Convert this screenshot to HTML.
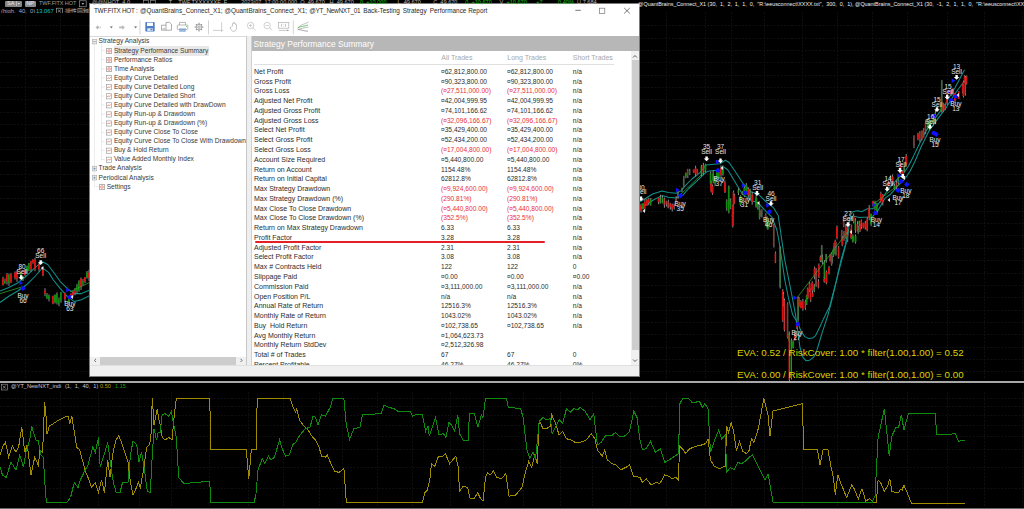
<!DOCTYPE html>
<html><head><meta charset="utf-8">
<style>
*{margin:0;padding:0;box-sizing:border-box}
html,body{width:1024px;height:509px;overflow:hidden;background:#000}
body{position:relative;font-family:"Liberation Sans",sans-serif}
.abs{position:absolute}
#dlg{position:absolute;left:89px;top:3px;width:551px;height:374px;background:#fff;border:1px solid #7a7a7a;overflow:hidden}
#dlg .in{position:absolute;left:-90px;top:-4px;width:1024px;height:509px}
.title{position:absolute;left:94px;top:7.4px;font-size:6.4px;color:#2a2a2a;white-space:nowrap;line-height:8px}
.tb{position:absolute}
#tree{position:absolute;left:90px;top:36px;width:157px;height:329px;background:#fff;border-top:1px solid #d9d9d9;border-right:1px solid #c8c8c8;overflow:hidden}
#tree .in2{position:absolute;left:-90px;top:-36px;width:1024px;height:509px}
.ti{position:absolute;font-size:6.62px;line-height:10px;color:#383838;white-space:nowrap}
.ti.sel{background:#e8e8e8;padding-right:1px}
.tb{position:absolute;left:92.3px;width:4.6px;height:5px;border:1px solid #b9b9b9;background:#e9e9e9}
.tbm{position:absolute;left:93.5px;width:2.4px;height:1px;background:#8aa0b8}
.tbp{position:absolute;left:94.2px;width:1px;height:3px;background:#8aa0b8}
.hd{position:absolute;left:101.5px;width:4px;height:0;border-top:1px dotted #c8c8c8}
.hd2{position:absolute;left:95px;width:5px;height:0;border-top:1px dotted #c8c8c8}
.ic{position:absolute;width:5.6px;height:5.8px;border:1px solid #a0a0a0;background:#fff}
.ic.grid{background:linear-gradient(90deg,transparent 40%,#f07070 40%,#f07070 60%,transparent 60%),linear-gradient(0deg,transparent 40%,#f07070 40%,#f07070 60%,transparent 60%),#f8c8c0}
.ic.chart{background:#fff}
.ic.chart::after{content:"";position:absolute;left:0.8px;top:1.6px;width:2.6px;height:1px;background:#e04040}
#tbl{position:absolute;left:251px;top:36px;width:388px;height:329px;background:#fff;overflow:hidden;border-left:1px solid #d0d0d0}
#tbl .in3{position:absolute;left:-251px;top:-36px;width:1024px;height:509px}
.hdr{position:absolute;left:251px;top:36px;width:388px;height:15px;background:#b7b7b7;color:#fff;font-size:8.45px;line-height:17px;padding-left:1.5px;white-space:nowrap}
.colh{position:absolute;top:53px;font-size:7px;color:#a8a8a8;white-space:nowrap;line-height:10px}
.r{position:absolute;left:0;height:10px;width:640px;font-size:7px;line-height:10px;color:#2c2c2c;white-space:nowrap}
.r span{position:absolute;top:0}
.c0{left:253px}.c1,.c2,.c3{font-size:6.64px}.c1{left:440px}.c2{left:506px}.c3{left:571.8px}
.red{color:#e8303a}
.lb{position:absolute;width:20px;text-align:center;font-size:6.5px;line-height:4.9px;color:#e8e8e8;white-space:nowrap}
</style></head><body>
<svg class="abs" style="left:0;top:0" width="1024" height="509" viewBox="0 0 1024 509">
<g stroke="#0f0f0f" stroke-width="1" stroke-dasharray="2 1.5" fill="none"><line x1="25.5" y1="12" x2="25.5" y2="380" /><line x1="60.5" y1="12" x2="60.5" y2="380" /><line x1="666.5" y1="12" x2="666.5" y2="380" /><line x1="705.5" y1="12" x2="705.5" y2="380" /><line x1="731.5" y1="12" x2="731.5" y2="380" /><line x1="764.5" y1="12" x2="764.5" y2="380" /><line x1="802.5" y1="12" x2="802.5" y2="380" /><line x1="837.5" y1="12" x2="837.5" y2="380" /><line x1="872.5" y1="12" x2="872.5" y2="380" /><line x1="907.5" y1="12" x2="907.5" y2="380" /><line x1="947.5" y1="12" x2="947.5" y2="380" /><line x1="984.5" y1="12" x2="984.5" y2="380" /><line x1="1022.5" y1="12" x2="1022.5" y2="380" /><line x1="25.5" y1="392" x2="25.5" y2="507" /><line x1="60.5" y1="392" x2="60.5" y2="507" /><line x1="666.5" y1="392" x2="666.5" y2="507" /><line x1="705.5" y1="392" x2="705.5" y2="507" /><line x1="731.5" y1="392" x2="731.5" y2="507" /><line x1="764.5" y1="392" x2="764.5" y2="507" /><line x1="802.5" y1="392" x2="802.5" y2="507" /><line x1="837.5" y1="392" x2="837.5" y2="507" /><line x1="872.5" y1="392" x2="872.5" y2="507" /><line x1="907.5" y1="392" x2="907.5" y2="507" /><line x1="947.5" y1="392" x2="947.5" y2="507" /><line x1="984.5" y1="392" x2="984.5" y2="507" /><line x1="1022.5" y1="392" x2="1022.5" y2="507" /><line x1="98.5" y1="392" x2="98.5" y2="507" /><line x1="139.5" y1="392" x2="139.5" y2="507" /><line x1="171.5" y1="392" x2="171.5" y2="507" /><line x1="209.5" y1="392" x2="209.5" y2="507" /><line x1="248.5" y1="392" x2="248.5" y2="507" /><line x1="283.5" y1="392" x2="283.5" y2="507" /><line x1="319.5" y1="392" x2="319.5" y2="507" /><line x1="342.5" y1="392" x2="342.5" y2="507" /><line x1="377.5" y1="392" x2="377.5" y2="507" /><line x1="412.5" y1="392" x2="412.5" y2="507" /><line x1="450.5" y1="392" x2="450.5" y2="507" /><line x1="483.5" y1="392" x2="483.5" y2="507" /><line x1="523.5" y1="392" x2="523.5" y2="507" /><line x1="560.5" y1="392" x2="560.5" y2="507" /><line x1="592.5" y1="392" x2="592.5" y2="507" /><line x1="630.5" y1="392" x2="630.5" y2="507" /><line x1="0" y1="25.5" x2="1024" y2="25.5" /><line x1="0" y1="38.5" x2="1024" y2="38.5" /><line x1="0" y1="50.5" x2="1024" y2="50.5" /><line x1="0" y1="62.5" x2="1024" y2="62.5" /><line x1="0" y1="75.5" x2="1024" y2="75.5" /><line x1="0" y1="87.5" x2="1024" y2="87.5" /><line x1="0" y1="99.5" x2="1024" y2="99.5" /><line x1="0" y1="112.5" x2="1024" y2="112.5" /><line x1="0" y1="124.5" x2="1024" y2="124.5" /><line x1="0" y1="137.5" x2="1024" y2="137.5" /><line x1="0" y1="149.5" x2="1024" y2="149.5" /><line x1="0" y1="161.5" x2="1024" y2="161.5" /><line x1="0" y1="174.5" x2="1024" y2="174.5" /><line x1="0" y1="186.5" x2="1024" y2="186.5" /><line x1="0" y1="198.5" x2="1024" y2="198.5" /><line x1="0" y1="211.5" x2="1024" y2="211.5" /><line x1="0" y1="223.5" x2="1024" y2="223.5" /><line x1="0" y1="235.5" x2="1024" y2="235.5" /><line x1="0" y1="248.5" x2="1024" y2="248.5" /><line x1="0" y1="260.5" x2="1024" y2="260.5" /><line x1="0" y1="273.5" x2="1024" y2="273.5" /><line x1="0" y1="285.5" x2="1024" y2="285.5" /><line x1="0" y1="297.5" x2="1024" y2="297.5" /><line x1="0" y1="310.5" x2="1024" y2="310.5" /><line x1="0" y1="322.5" x2="1024" y2="322.5" /><line x1="0" y1="334.5" x2="1024" y2="334.5" /><line x1="0" y1="347.5" x2="1024" y2="347.5" /><line x1="0" y1="359.5" x2="1024" y2="359.5" /><line x1="0" y1="371.5" x2="1024" y2="371.5" /><line x1="0" y1="398.5" x2="1024" y2="398.5" /><line x1="0" y1="406.5" x2="1024" y2="406.5" /><line x1="0" y1="415.5" x2="1024" y2="415.5" /><line x1="0" y1="425.5" x2="1024" y2="425.5" /><line x1="0" y1="436.5" x2="1024" y2="436.5" /><line x1="0" y1="449.5" x2="1024" y2="449.5" /><line x1="0" y1="467.5" x2="1024" y2="467.5" /><line x1="0" y1="488.5" x2="1024" y2="488.5" /></g>
<polyline points="0.0,455.0 2.5,447.1 5.4,442.0 8.7,457.2 12.4,446.0 16.0,452.1 18.6,447.1 21.8,427.3 24.8,452.1 27.2,445.0 31.0,475.0 34.7,457.2 38.4,465.3 40.0,450.1 42.6,452.1 44.6,402.3 45.8,412.4 47.0,433.9 49.5,425.8 53.0,423.8 59.4,419.7 63.9,417.4 68.0,416.1 69.8,423.6 71.8,416.1 76.7,447.1 79.7,449.9 85.4,471.2 89.0,479.9 91.6,487.5 95.3,482.5 98.5,492.6 101.5,479.9 104.5,492.6 107.7,459.9 110.0,477.4 112.6,455.0 115.8,440.0 118.8,435.9 122.5,445.0 128.0,462.2 130.5,482.5 133.0,495.0 135.4,490.0 138.4,482.5 140.4,487.5 144.0,467.3 146.6,447.1 149.0,445.0 150.8,440.0 152.3,398.5 154.0,424.8 157.2,408.6 159.0,419.7 160.2,424.8 162.2,437.4 165.0,440.0 168.8,437.4 172.0,440.0 173.8,419.7 176.3,398.5 209.7,398.5 211.0,449.9 246.3,449.9 248.8,478.7 251.3,449.9 256.5,449.9 256.5,434.9 257.2,398.5 290.2,398.5 293.1,407.4 295.6,412.4 296.8,408.6 299.3,419.7 303.0,424.8 308.0,429.9 311.7,435.9 315.4,440.0 319.1,447.1 321.6,456.2 325.3,457.2 327.3,455.0 330.3,462.2 334.7,471.2 338.9,472.4 343.9,468.7 346.3,502.5 422.4,502.5 424.8,492.6 427.3,490.0 429.8,479.9 431.5,463.7 434.7,466.3 438.5,456.2 442.9,456.2 445.4,453.6 449.6,463.7 452.8,459.9 455.8,456.2 458.3,467.3 459.5,491.3 463.2,486.2 467.7,487.5 470.1,498.7 474.3,498.7 477.6,492.6 480.0,497.5 483.0,501.3 485.5,477.4 487.5,472.4 489.9,475.0 493.4,471.2 496.6,477.4 501.6,478.7 505.8,473.7 509.0,496.2 515.7,495.0 521.9,487.5 525.6,471.2 528.8,461.2 531.8,467.3 534.8,455.0 537.2,463.7 539.2,419.7 542.9,428.6 546.7,428.6 550.4,426.1 551.6,414.7 555.3,422.4 559.0,434.9 562.7,431.2 566.5,438.7 570.9,440.0 575.1,442.4 580.0,442.4 586.3,440.0 591.2,433.6 594.9,438.7 597.4,449.9 602.3,456.2 604.8,449.9 607.3,459.9 612.2,463.7 616.0,465.0 620.9,469.9 625.9,467.3 629.6,465.0 633.3,476.2 640.0,477.4 642.5,482.5 646.2,478.7 651.1,485.0 656.1,482.5 659.8,483.7 664.8,475.0 668.5,476.2 672.2,478.7 675.9,477.4 678.4,479.9 679.6,446.0 683.3,449.9 685.8,453.6 689.5,448.7 696.9,446.1 701.9,444.9 705.6,443.6 708.0,438.7 710.5,459.9 714.3,466.2 719.2,468.7 725.4,466.2 726.6,426.1 728.6,432.4 731.1,422.4 733.6,431.2 736.5,451.1 739.5,441.2 742.7,451.1 746.4,453.6 748.9,451.1 751.4,438.7 753.9,442.4 758.3,428.6 763.8,398.5 768.0,414.7 770.0,436.1 773.0,411.1 782.9,408.6 802.2,403.6 803.9,449.9 817.5,449.9 820.0,465.0 823.0,449.9 827.9,449.9 831.1,467.3 833.6,478.7 835.3,495.0 837.8,475.0 841.0,483.7 846.7,497.5 851.7,485.0 854.1,488.7 858.3,498.7 862.0,488.7 865.8,501.3 869.5,498.7 873.2,502.5 876.4,502.5 878.1,479.9 880.6,482.5 884.3,491.3 888.0,485.0 889.8,478.7 891.8,491.3 896.0,492.6 898.5,492.6 901.0,488.7 902.2,490.0 903.9,485.0 907.1,492.6 911.3,503.1 965.0,503.1" fill="none" stroke="#9e8c00" stroke-width="1" shape-rendering="crispEdges"/>
<polyline points="0.0,467.3 2.5,475.0 6.2,477.4 11.0,462.2 16.0,469.9 19.8,455.0 23.5,467.3 26.0,452.1 29.7,440.0 31.7,425.8 33.4,432.4 35.9,440.0 38.4,441.0 40.8,455.0 43.3,457.2 45.8,497.5 47.0,502.5 66.8,502.5 70.5,497.5 74.3,482.5 78.0,487.5 80.4,479.9 84.0,472.4 87.9,465.0 92.8,447.1 95.3,452.1 98.5,437.4 100.2,467.3 104.0,455.0 107.7,442.5 111.4,469.9 113.4,482.5 116.3,492.6 120.0,492.6 122.5,482.5 128.0,482.5 130.5,455.0 133.0,441.0 136.7,445.0 139.0,462.2 141.6,452.1 144.8,472.4 147.3,491.3 150.3,492.6 152.3,455.0 154.0,428.9 156.5,440.0 158.2,432.4 160.2,432.4 162.2,414.7 165.0,413.7 168.8,416.1 171.3,411.1 173.8,424.8 176.3,437.4 178.7,477.4 183.7,483.5 209.7,481.3 211.0,502.5 254.2,502.5 256.0,493.6 258.0,469.9 262.2,458.7 264.7,463.7 268.4,456.2 270.9,459.9 274.5,457.2 279.5,440.0 282.7,449.9 285.7,456.2 289.4,455.0 292.6,444.9 295.6,442.4 300.0,434.9 305.5,428.6 310.0,427.3 313.0,416.1 315.4,417.4 317.9,424.8 321.6,414.7 325.3,416.1 330.3,407.4 332.7,398.5 343.9,398.5 346.3,424.8 349.6,439.4 353.8,428.6 360.0,427.3 362.4,414.7 381.0,413.7 384.0,404.9 389.0,407.4 393.9,408.6 397.6,411.1 410.0,411.1 412.5,416.1 416.2,414.7 422.4,414.7 425.6,431.2 428.0,426.1 429.3,436.1 432.3,427.3 435.5,417.4 439.0,434.9 443.4,433.6 445.9,437.4 448.9,422.4 451.3,424.8 454.5,431.2 457.8,414.7 459.5,433.6 463.2,440.0 468.2,440.0 469.4,413.7 474.3,413.7 478.0,427.3 481.3,414.7 483.0,417.4 485.5,398.5 506.5,398.5 508.3,407.4 520.7,408.6 523.1,417.4 526.9,449.9 529.8,458.7 533.0,452.1 535.5,459.9 539.2,421.2 542.9,417.4 546.2,419.7 550.4,418.6 552.1,433.6 556.6,424.8 559.5,419.7 562.7,423.6 566.5,408.6 570.2,412.4 573.9,408.6 577.6,409.8 580.0,407.4 585.0,411.1 590.0,419.7 593.7,413.7 597.4,444.9 601.0,442.4 606.0,434.9 611.0,436.1 615.5,432.4 619.0,436.1 624.6,436.1 629.6,431.2 633.8,411.1 637.0,417.4 640.0,440.0 642.5,449.9 646.2,448.7 650.4,441.2 655.3,452.1 660.3,448.7 664.8,462.4 669.2,459.9 674.7,456.2 678.4,453.6 680.0,403.6 682.6,398.5 688.3,398.5 692.0,402.3 695.7,402.3 699.4,401.1 702.4,407.4 704.9,403.6 708.0,408.6 710.5,452.4 714.3,441.2 718.7,429.9 721.7,438.7 725.4,434.9 726.6,472.4 730.3,467.3 734.0,469.9 737.8,462.4 741.5,463.7 745.2,461.2 748.9,457.5 752.6,455.0 757.6,465.0 761.3,472.4 765.0,479.9 768.0,473.7 773.0,502.0 774.2,502.5 872.0,502.5 875.0,496.2 878.1,437.4 881.4,422.4 884.3,408.6 889.3,456.2 891.8,436.1 896.0,427.3 898.5,427.8 901.4,414.7 903.9,429.9 908.4,413.7 935.1,413.7 936.8,434.9 945.5,434.9 955.4,433.6 958.4,441.2 964.8,440.4" fill="none" stroke="#0f8a0f" stroke-width="1" shape-rendering="crispEdges"/>
<rect x="0" y="381" width="1024" height="2" fill="#a8a8a8"/>
<rect x="0" y="508" width="1024" height="1" fill="#6a6a6a"/>
<polyline points="640.0,201.9 646.3,198.0 652.6,194.0 662.0,190.9 668.3,192.5 676.2,193.2 680.9,190.9 685.6,185.4 691.9,179.0 699.7,172.8 706.0,165.0 713.9,164.2 720.0,163.8 725.5,160.2 729.3,162.7 734.2,170.0 743.6,184.2 751.4,192.0 757.7,193.6 765.6,201.4 773.5,207.7 778.2,215.6 781.8,240.0 784.7,259.6 788.7,279.3 792.6,299.0 795.5,314.7 797.8,332.0 799.9,347.0 802.8,357.2 805.8,360.7 809.7,360.2 813.6,357.2 816.6,351.3 819.5,341.5 822.5,331.7 825.4,322.9 828.0,315.0 832.1,299.0 838.4,272.6 843.4,253.8 847.5,238.0 849.8,220.5 852.7,216.1 859.6,217.6 867.5,217.1 872.4,216.6 877.3,211.7 881.2,204.8 885.2,197.9 890.0,194.8 898.3,185.4 905.4,178.3 910.0,171.2 914.8,161.8 920.9,147.2 928.7,131.4 936.6,120.4 946.0,107.9 950.8,100.0 958.2,89.3 964.5,80.7" fill="none" stroke="#11908c" stroke-width="1.05" stroke-linejoin="round"/>
<polyline points="640.0,209.0 646.3,204.2 654.2,199.5 662.0,195.6 668.3,197.2 676.2,198.0 682.5,195.6 688.7,188.5 696.6,181.4 702.9,175.2 707.6,171.2 713.9,170.4 720.0,170.4 723.0,166.5 727.9,170.0 742.0,193.6 751.4,200.7 757.7,202.2 764.0,209.3 771.9,217.2 776.9,230.0 778.8,240.0 781.8,259.6 784.7,279.3 788.7,299.0 792.6,314.7 797.9,322.9 800.8,330.7 804.8,336.6 808.7,338.6 812.6,338.1 815.6,335.6 819.5,327.8 823.4,318.9 829.6,306.6 835.9,282.7 841.0,260.0 845.6,243.8 847.8,227.4 850.8,214.6 852.7,211.7 857.6,210.7 861.6,211.7 867.5,208.8 872.4,208.8 877.3,205.8 882.2,198.0 887.7,190.0 895.9,180.6 904.2,172.4 908.9,165.3 913.6,155.9 917.7,147.2 925.6,131.4 933.5,120.4 942.9,107.9 947.6,100.0 955.0,87.7 964.5,69.7" fill="none" stroke="#11908c" stroke-width="1.05" stroke-linejoin="round"/>
<polyline points="0.0,291.0 8.8,287.5 17.7,283.0 26.5,276.0 35.4,267.1 42.4,261.8 47.7,264.5 53.0,271.5 60.1,281.3 67.2,288.3 74.3,293.6 81.3,293.6 90.0,290.1" fill="none" stroke="#11908c" stroke-width="1.05" stroke-linejoin="round"/>
<polyline points="0.0,302.5 8.8,296.3 17.7,291.0 26.5,284.8 35.4,276.0 42.4,268.0 48.6,272.4 53.0,279.5 60.1,288.3 67.2,296.3 74.3,301.6 81.3,299.8 90.0,295.4" fill="none" stroke="#11908c" stroke-width="1.05" stroke-linejoin="round"/>
</svg>
<svg class="abs" style="left:0;top:0" width="1024" height="381" viewBox="0 0 1024 381">
<g fill="#8a8a8a"><rect x="640.5" y="203.7" width="1" height="8.8"/><rect x="642.5" y="203.2" width="1" height="6.4"/><rect x="644.4" y="198.8" width="1" height="12.5"/><rect x="646.4" y="198.5" width="1" height="7.4"/><rect x="648.3" y="197.7" width="1" height="7.5"/><rect x="650.3" y="197.9" width="1" height="7.8"/><rect x="658.1" y="197.7" width="1" height="6.5"/><rect x="660.0" y="194.8" width="1" height="8.6"/><rect x="662.0" y="196.0" width="1" height="7.3"/><rect x="663.9" y="197.5" width="1" height="10.3"/><rect x="665.9" y="200.8" width="1" height="5.8"/><rect x="667.8" y="199.7" width="1" height="8.6"/><rect x="669.8" y="202.8" width="1" height="6.9"/><rect x="671.7" y="203.6" width="1" height="7.9"/><rect x="673.7" y="203.4" width="1" height="6.1"/><rect x="675.6" y="196.2" width="1" height="6.2"/><rect x="677.6" y="191.3" width="1" height="7.4"/><rect x="681.5" y="187.6" width="1" height="4.6"/><rect x="683.4" y="175.8" width="1" height="11.1"/><rect x="685.4" y="172.5" width="1" height="5.8"/><rect x="687.3" y="168.8" width="1" height="9.1"/><rect x="689.3" y="168.8" width="1" height="6.3"/><rect x="693.2" y="169.5" width="1" height="3.3"/><rect x="695.1" y="165.7" width="1" height="11.0"/><rect x="697.1" y="169.2" width="1" height="6.0"/><rect x="701.0" y="164.9" width="1" height="11.3"/><rect x="702.9" y="162.8" width="1" height="12.4"/><rect x="704.9" y="163.8" width="1" height="8.7"/><rect x="710.7" y="180.5" width="1" height="11.8"/><rect x="712.7" y="170.4" width="1" height="13.0"/><rect x="714.6" y="176.6" width="1" height="9.4"/><rect x="716.6" y="170.6" width="1" height="9.1"/><rect x="718.5" y="171.8" width="1" height="6.4"/><rect x="720.5" y="165.4" width="1" height="11.5"/><rect x="722.4" y="165.4" width="1" height="10.3"/><rect x="724.4" y="180.5" width="1" height="12.5"/><rect x="726.3" y="199.3" width="1" height="11.5"/><rect x="728.3" y="199.6" width="1" height="5.7"/><rect x="730.2" y="198.3" width="1" height="10.8"/><rect x="732.2" y="211.9" width="1" height="6.6"/><rect x="734.1" y="193.7" width="1" height="10.3"/><rect x="738.0" y="188.2" width="1" height="6.9"/><rect x="740.0" y="195.2" width="1" height="11.0"/><rect x="741.9" y="191.2" width="1" height="3.9"/><rect x="743.9" y="185.6" width="1" height="11.5"/><rect x="745.8" y="183.1" width="1" height="11.4"/><rect x="747.8" y="187.1" width="1" height="10.7"/><rect x="749.7" y="188.6" width="1" height="11.7"/><rect x="751.7" y="191.8" width="1" height="12.9"/><rect x="755.6" y="195.2" width="1" height="12.4"/><rect x="757.5" y="202.0" width="1" height="7.6"/><rect x="759.5" y="210.4" width="1" height="6.4"/><rect x="761.4" y="209.1" width="1" height="8.3"/><rect x="765.3" y="213.3" width="1" height="12.4"/><rect x="767.3" y="219.6" width="1" height="10.2"/><rect x="775.1" y="251.5" width="1" height="11.6"/><rect x="782.9" y="291.9" width="1" height="14.3"/><rect x="788.7" y="331.4" width="1" height="10.4"/><rect x="792.6" y="340.2" width="1" height="8.4"/><rect x="794.6" y="330.7" width="1" height="9.8"/><rect x="796.5" y="321.7" width="1" height="7.2"/><rect x="798.5" y="297.0" width="1" height="9.7"/><rect x="800.4" y="300.1" width="1" height="8.1"/><rect x="802.4" y="298.8" width="1" height="11.9"/><rect x="806.3" y="294.7" width="1" height="10.3"/><rect x="810.2" y="288.5" width="1" height="13.4"/><rect x="812.1" y="290.9" width="1" height="6.0"/><rect x="814.1" y="266.5" width="1" height="12.8"/><rect x="818.0" y="279.2" width="1" height="9.2"/><rect x="819.9" y="255.5" width="1" height="6.6"/><rect x="821.9" y="254.6" width="1" height="9.7"/><rect x="823.8" y="276.4" width="1" height="6.3"/><rect x="825.8" y="253.9" width="1" height="8.8"/><rect x="829.7" y="254.2" width="1" height="7.2"/><rect x="831.6" y="256.2" width="1" height="7.3"/><rect x="833.6" y="243.1" width="1" height="11.1"/><rect x="835.5" y="242.1" width="1" height="13.5"/><rect x="841.4" y="229.8" width="1" height="11.0"/><rect x="843.3" y="217.2" width="1" height="10.0"/><rect x="845.3" y="224.8" width="1" height="13.7"/><rect x="847.2" y="231.9" width="1" height="10.0"/><rect x="851.1" y="224.6" width="1" height="8.8"/><rect x="853.1" y="213.5" width="1" height="9.9"/><rect x="855.0" y="218.3" width="1" height="14.6"/><rect x="857.0" y="221.2" width="1" height="10.6"/><rect x="858.9" y="220.7" width="1" height="6.9"/><rect x="860.9" y="219.4" width="1" height="9.5"/><rect x="862.8" y="222.8" width="1" height="5.5"/><rect x="864.8" y="220.9" width="1" height="8.7"/><rect x="866.7" y="216.9" width="1" height="14.4"/><rect x="868.7" y="205.0" width="1" height="15.3"/><rect x="870.6" y="213.6" width="1" height="12.5"/><rect x="872.6" y="200.7" width="1" height="5.8"/><rect x="874.5" y="200.8" width="1" height="9.7"/><rect x="876.5" y="202.9" width="1" height="11.5"/><rect x="880.4" y="191.6" width="1" height="11.2"/><rect x="882.3" y="194.1" width="1" height="11.3"/><rect x="888.2" y="180.6" width="1" height="5.2"/><rect x="890.1" y="175.3" width="1" height="6.6"/><rect x="892.1" y="174.4" width="1" height="11.1"/><rect x="894.0" y="183.5" width="1" height="6.4"/><rect x="896.0" y="180.5" width="1" height="9.5"/><rect x="897.9" y="174.9" width="1" height="9.3"/><rect x="899.9" y="161.4" width="1" height="12.6"/><rect x="901.8" y="170.5" width="1" height="7.5"/><rect x="903.8" y="166.0" width="1" height="6.2"/><rect x="905.7" y="154.0" width="1" height="12.1"/><rect x="913.5" y="135.3" width="1" height="12.9"/><rect x="917.4" y="132.7" width="1" height="7.6"/><rect x="919.4" y="131.1" width="1" height="10.9"/><rect x="921.3" y="130.6" width="1" height="9.7"/><rect x="923.3" y="128.0" width="1" height="9.5"/><rect x="925.2" y="120.5" width="1" height="13.7"/><rect x="927.2" y="119.0" width="1" height="10.3"/><rect x="929.1" y="119.6" width="1" height="10.8"/><rect x="933.0" y="114.4" width="1" height="11.3"/><rect x="935.0" y="110.1" width="1" height="14.0"/><rect x="940.8" y="104.0" width="1" height="8.5"/><rect x="942.8" y="102.8" width="1" height="9.2"/><rect x="944.7" y="104.0" width="1" height="6.1"/><rect x="946.7" y="93.2" width="1" height="11.8"/><rect x="950.6" y="89.9" width="1" height="6.2"/><rect x="952.5" y="88.3" width="1" height="7.1"/><rect x="954.5" y="92.8" width="1" height="10.3"/><rect x="958.4" y="91.1" width="1" height="7.7"/><rect x="962.3" y="84.2" width="1" height="9.4"/><rect x="964.2" y="75.1" width="1" height="7.9"/><rect x="966.2" y="75.5" width="1" height="9.1"/><rect x="2.5" y="276.7" width="1" height="8.8"/><rect x="4.5" y="278.5" width="1" height="5.2"/><rect x="6.5" y="273.0" width="1" height="11.5"/><rect x="8.5" y="273.6" width="1" height="12.2"/><rect x="10.5" y="273.1" width="1" height="10.0"/><rect x="14.5" y="271.4" width="1" height="8.1"/><rect x="16.5" y="270.5" width="1" height="11.3"/><rect x="20.5" y="271.6" width="1" height="5.0"/><rect x="22.5" y="276.0" width="1" height="5.0"/><rect x="24.5" y="268.9" width="1" height="7.3"/><rect x="26.5" y="265.5" width="1" height="8.2"/><rect x="28.5" y="262.9" width="1" height="8.4"/><rect x="30.5" y="260.7" width="1" height="11.1"/><rect x="32.5" y="259.1" width="1" height="4.7"/><rect x="34.5" y="257.8" width="1" height="13.4"/><rect x="38.5" y="263.3" width="1" height="8.2"/><rect x="42.5" y="266.9" width="1" height="9.3"/><rect x="44.5" y="288.2" width="1" height="8.0"/><rect x="46.5" y="293.0" width="1" height="6.1"/><rect x="48.5" y="294.4" width="1" height="7.0"/><rect x="52.5" y="295.6" width="1" height="8.6"/><rect x="54.5" y="294.3" width="1" height="9.2"/><rect x="56.5" y="292.3" width="1" height="12.2"/><rect x="58.5" y="297.5" width="1" height="8.7"/><rect x="60.5" y="291.8" width="1" height="10.9"/><rect x="64.5" y="292.6" width="1" height="9.6"/><rect x="68.5" y="297.6" width="1" height="7.1"/><rect x="70.5" y="293.4" width="1" height="4.2"/><rect x="72.5" y="290.7" width="1" height="6.1"/><rect x="74.5" y="287.9" width="1" height="7.4"/><rect x="76.5" y="283.8" width="1" height="9.6"/><rect x="78.5" y="280.2" width="1" height="11.6"/><rect x="80.5" y="277.5" width="1" height="12.5"/><rect x="82.5" y="278.9" width="1" height="6.8"/><rect x="84.5" y="277.0" width="1" height="6.3"/><rect x="86.5" y="271.0" width="1" height="7.6"/><rect x="88.5" y="269.8" width="1" height="11.0"/><rect x="90.5" y="270.5" width="1" height="11.1"/><rect x="728.4" y="185.5" width="1" height="28.0"/><rect x="732.3" y="204.5" width="1" height="23.0"/><rect x="733.1" y="190.5" width="1" height="23.0"/><rect x="710.2" y="171.5" width="1" height="13.6"/><rect x="712.0" y="184.5" width="1" height="10.4"/><rect x="789.0" y="333.5" width="1" height="48.0"/><rect x="787.2" y="302.2" width="1" height="36.3"/><rect x="779.7" y="246.3" width="1" height="42.2"/><rect x="782.3" y="289.1" width="1" height="32.8"/><rect x="773.4" y="223.9" width="1" height="23.6"/><rect x="805.0" y="299.8" width="1" height="10.1"/><rect x="807.3" y="287.5" width="1" height="11.8"/><rect x="809.1" y="282.1" width="1" height="10.1"/><rect x="811.7" y="281.3" width="1" height="10.0"/><rect x="813.8" y="283.9" width="1" height="8.3"/><rect x="815.6" y="268.0" width="1" height="18.9"/><rect x="818.4" y="263.5" width="1" height="14.6"/><rect x="821.4" y="245.0" width="1" height="17.1"/><rect x="824.1" y="260.0" width="1" height="19.8"/><rect x="825.9" y="270.5" width="1" height="13.8"/><rect x="828.5" y="266.2" width="1" height="8.3"/><rect x="831.2" y="252.1" width="1" height="13.6"/><rect x="832.9" y="247.7" width="1" height="9.2"/><rect x="834.7" y="239.7" width="1" height="8.3"/><rect x="836.5" y="225.5" width="1" height="13.7"/><rect x="838.2" y="245.9" width="1" height="12.7"/><rect x="841.8" y="236.2" width="1" height="10.0"/><rect x="843.5" y="230.9" width="1" height="10.0"/><rect x="850.6" y="229.1" width="1" height="10.1"/><rect x="852.4" y="234.4" width="1" height="8.3"/><rect x="855.0" y="234.4" width="1" height="9.2"/><rect x="857.7" y="225.5" width="1" height="8.4"/><rect x="859.5" y="223.8" width="1" height="8.3"/><rect x="941.4" y="79.9" width="1" height="31.3"/><rect x="965.0" y="76.0" width="1" height="19.5"/><rect x="963.0" y="80.5" width="1" height="17.0"/><rect x="759.2" y="205.3" width="1" height="14.2"/><rect x="766.7" y="216.5" width="1" height="12.0"/><rect x="784.0" y="298.5" width="1" height="33.0"/><rect x="791.0" y="338.5" width="1" height="41.0"/><rect x="797.7" y="296.5" width="1" height="25.0"/></g>
<g><rect x="640.0" y="205.2" width="1.2" height="5.5" fill="#d81212"/><rect x="642.0" y="203.5" width="2" height="5.2" fill="#0e8c0e"/><rect x="643.9" y="201.8" width="1.2" height="6.7" fill="#d81212"/><rect x="645.9" y="200.1" width="2" height="5.6" fill="#d81212"/><rect x="647.8" y="199.0" width="1.2" height="3.7" fill="#d81212"/><rect x="649.8" y="199.3" width="1.2" height="5.6" fill="#0e8c0e"/><rect x="657.6" y="197.9" width="2" height="4.0" fill="#d81212"/><rect x="659.5" y="197.4" width="1.2" height="6.1" fill="#0e8c0e"/><rect x="661.5" y="197.2" width="1.2" height="5.9" fill="#0e8c0e"/><rect x="663.4" y="198.5" width="1.2" height="6.4" fill="#d81212"/><rect x="665.4" y="201.0" width="1.2" height="3.3" fill="#d81212"/><rect x="667.3" y="201.9" width="1.2" height="6.0" fill="#d81212"/><rect x="669.3" y="203.6" width="2" height="3.2" fill="#d81212"/><rect x="671.2" y="204.8" width="2" height="4.2" fill="#d81212"/><rect x="673.2" y="204.2" width="1.2" height="3.0" fill="#d81212"/><rect x="675.1" y="197.9" width="1.2" height="3.8" fill="#d81212"/><rect x="677.1" y="192.7" width="1.2" height="4.2" fill="#0e8c0e"/><rect x="681.0" y="188.4" width="1.2" height="3.2" fill="#0e8c0e"/><rect x="682.9" y="178.4" width="1.2" height="6.7" fill="#0e8c0e"/><rect x="684.9" y="173.2" width="2" height="3.0" fill="#0e8c0e"/><rect x="686.8" y="169.4" width="1.2" height="6.4" fill="#d81212"/><rect x="688.8" y="170.6" width="1.2" height="3.6" fill="#0e8c0e"/><rect x="692.7" y="169.7" width="2" height="2.6" fill="#d81212"/><rect x="694.6" y="168.4" width="2" height="5.4" fill="#d81212"/><rect x="696.6" y="169.3" width="1.2" height="5.9" fill="#d81212"/><rect x="700.5" y="166.3" width="1.2" height="7.6" fill="#0e8c0e"/><rect x="702.4" y="165.0" width="1.2" height="7.5" fill="#d81212"/><rect x="704.4" y="164.9" width="2" height="5.6" fill="#0e8c0e"/><rect x="710.2" y="182.3" width="2" height="8.8" fill="#d81212"/><rect x="712.2" y="173.4" width="1.2" height="7.4" fill="#0e8c0e"/><rect x="714.1" y="177.9" width="2" height="5.6" fill="#0e8c0e"/><rect x="716.1" y="172.0" width="1.2" height="7.0" fill="#0e8c0e"/><rect x="718.0" y="172.6" width="1.2" height="5.6" fill="#0e8c0e"/><rect x="720.0" y="168.2" width="1.2" height="6.8" fill="#d81212"/><rect x="721.9" y="166.0" width="2" height="8.4" fill="#0e8c0e"/><rect x="723.9" y="182.3" width="2" height="9.8" fill="#d81212"/><rect x="725.8" y="201.5" width="1.2" height="6.5" fill="#0e8c0e"/><rect x="727.8" y="200.2" width="2" height="3.9" fill="#d81212"/><rect x="729.7" y="201.2" width="1.2" height="6.5" fill="#0e8c0e"/><rect x="731.7" y="214.0" width="2" height="2.8" fill="#d81212"/><rect x="733.6" y="195.0" width="1.2" height="8.8" fill="#d81212"/><rect x="737.5" y="189.5" width="1.2" height="3.6" fill="#0e8c0e"/><rect x="739.5" y="195.8" width="2" height="9.0" fill="#0e8c0e"/><rect x="741.4" y="191.7" width="1.2" height="2.6" fill="#0e8c0e"/><rect x="743.4" y="187.9" width="2" height="8.1" fill="#0e8c0e"/><rect x="745.3" y="185.2" width="2" height="8.9" fill="#0e8c0e"/><rect x="747.3" y="188.8" width="2" height="6.3" fill="#d81212"/><rect x="749.2" y="189.2" width="1.2" height="8.9" fill="#0e8c0e"/><rect x="751.2" y="194.5" width="2" height="7.3" fill="#d81212"/><rect x="755.1" y="197.7" width="2" height="8.8" fill="#0e8c0e"/><rect x="757.0" y="203.4" width="1.2" height="6.0" fill="#0e8c0e"/><rect x="759.0" y="211.4" width="1.2" height="3.0" fill="#d81212"/><rect x="760.9" y="211.6" width="1.2" height="3.7" fill="#0e8c0e"/><rect x="764.8" y="214.8" width="1.2" height="9.9" fill="#d81212"/><rect x="766.8" y="221.3" width="2" height="7.6" fill="#0e8c0e"/><rect x="774.6" y="253.2" width="1.2" height="9.3" fill="#d81212"/><rect x="782.4" y="294.3" width="1.2" height="10.3" fill="#d81212"/><rect x="788.2" y="334.2" width="1.2" height="6.8" fill="#0e8c0e"/><rect x="792.1" y="341.6" width="2" height="6.0" fill="#0e8c0e"/><rect x="794.1" y="333.1" width="2" height="7.4" fill="#d81212"/><rect x="796.0" y="322.8" width="1.2" height="4.3" fill="#d81212"/><rect x="798.0" y="297.7" width="2" height="8.3" fill="#d81212"/><rect x="799.9" y="301.7" width="2" height="6.0" fill="#d81212"/><rect x="801.9" y="301.4" width="1.2" height="7.6" fill="#d81212"/><rect x="805.8" y="295.7" width="1.2" height="8.4" fill="#0e8c0e"/><rect x="809.7" y="289.3" width="1.2" height="10.5" fill="#d81212"/><rect x="811.6" y="293.3" width="2" height="3.3" fill="#d81212"/><rect x="813.6" y="268.5" width="2" height="8.0" fill="#d81212"/><rect x="817.5" y="281.3" width="1.2" height="6.5" fill="#d81212"/><rect x="819.4" y="257.0" width="2" height="3.3" fill="#d81212"/><rect x="821.4" y="257.6" width="1.2" height="4.0" fill="#0e8c0e"/><rect x="823.3" y="278.7" width="2" height="3.0" fill="#d81212"/><rect x="825.3" y="253.9" width="1.2" height="6.6" fill="#0e8c0e"/><rect x="829.2" y="254.8" width="1.2" height="6.1" fill="#d81212"/><rect x="831.1" y="258.3" width="1.2" height="2.6" fill="#0e8c0e"/><rect x="833.1" y="246.0" width="1.2" height="5.7" fill="#d81212"/><rect x="835.0" y="244.5" width="1.2" height="9.8" fill="#0e8c0e"/><rect x="840.9" y="231.9" width="1.2" height="8.6" fill="#d81212"/><rect x="842.8" y="219.1" width="1.2" height="6.3" fill="#d81212"/><rect x="844.8" y="226.8" width="2" height="10.1" fill="#d81212"/><rect x="846.7" y="234.0" width="1.2" height="5.6" fill="#0e8c0e"/><rect x="850.6" y="225.8" width="1.2" height="7.4" fill="#d81212"/><rect x="852.6" y="216.2" width="2" height="5.5" fill="#d81212"/><rect x="854.5" y="220.2" width="1.2" height="10.2" fill="#0e8c0e"/><rect x="856.5" y="224.0" width="1.2" height="7.3" fill="#d81212"/><rect x="858.4" y="220.8" width="1.2" height="3.9" fill="#0e8c0e"/><rect x="860.4" y="220.3" width="1.2" height="6.7" fill="#d81212"/><rect x="862.3" y="222.8" width="2" height="4.8" fill="#d81212"/><rect x="864.3" y="223.6" width="2" height="3.8" fill="#d81212"/><rect x="866.2" y="219.6" width="1.2" height="10.4" fill="#d81212"/><rect x="868.2" y="207.9" width="1.2" height="10.3" fill="#d81212"/><rect x="870.1" y="213.9" width="2" height="10.3" fill="#0e8c0e"/><rect x="872.1" y="201.0" width="1.2" height="4.1" fill="#d81212"/><rect x="874.0" y="202.1" width="2" height="6.1" fill="#0e8c0e"/><rect x="876.0" y="203.6" width="1.2" height="10.5" fill="#0e8c0e"/><rect x="879.9" y="193.7" width="1.2" height="7.5" fill="#d81212"/><rect x="881.8" y="194.9" width="1.2" height="7.6" fill="#d81212"/><rect x="887.7" y="182.4" width="2" height="3.0" fill="#d81212"/><rect x="889.6" y="177.0" width="1.2" height="3.1" fill="#0e8c0e"/><rect x="891.6" y="176.6" width="2" height="6.3" fill="#d81212"/><rect x="893.5" y="185.8" width="2" height="3.5" fill="#0e8c0e"/><rect x="895.5" y="182.5" width="1.2" height="4.6" fill="#d81212"/><rect x="897.4" y="176.2" width="1.2" height="6.9" fill="#0e8c0e"/><rect x="899.4" y="163.1" width="2" height="9.5" fill="#d81212"/><rect x="901.3" y="171.2" width="2" height="4.9" fill="#d81212"/><rect x="903.3" y="166.8" width="1.2" height="4.9" fill="#0e8c0e"/><rect x="905.2" y="156.1" width="2" height="8.3" fill="#d81212"/><rect x="913.0" y="136.5" width="1.2" height="8.9" fill="#d81212"/><rect x="916.9" y="133.8" width="2" height="5.3" fill="#d81212"/><rect x="918.9" y="133.6" width="1.2" height="6.7" fill="#d81212"/><rect x="920.8" y="130.7" width="2" height="8.1" fill="#d81212"/><rect x="922.8" y="130.5" width="1.2" height="6.9" fill="#0e8c0e"/><rect x="924.7" y="122.7" width="1.2" height="8.8" fill="#d81212"/><rect x="926.7" y="120.9" width="2" height="7.6" fill="#0e8c0e"/><rect x="928.6" y="120.8" width="2" height="8.6" fill="#0e8c0e"/><rect x="932.5" y="116.6" width="2" height="6.4" fill="#0e8c0e"/><rect x="934.5" y="112.5" width="1.2" height="9.1" fill="#0e8c0e"/><rect x="940.3" y="105.3" width="1.2" height="6.0" fill="#0e8c0e"/><rect x="942.3" y="103.3" width="1.2" height="8.1" fill="#d81212"/><rect x="944.2" y="104.9" width="1.2" height="4.8" fill="#d81212"/><rect x="946.2" y="94.6" width="1.2" height="8.7" fill="#d81212"/><rect x="950.1" y="90.7" width="1.2" height="3.4" fill="#d81212"/><rect x="952.0" y="88.8" width="1.2" height="4.3" fill="#d81212"/><rect x="954.0" y="93.6" width="2" height="6.9" fill="#d81212"/><rect x="957.9" y="91.8" width="1.2" height="6.9" fill="#d81212"/><rect x="961.8" y="85.0" width="2" height="5.6" fill="#d81212"/><rect x="963.7" y="76.2" width="1.2" height="4.4" fill="#d81212"/><rect x="965.7" y="76.4" width="1.2" height="7.3" fill="#d81212"/><rect x="2.0" y="278.3" width="1.2" height="6.7" fill="#d81212"/><rect x="4.0" y="281.0" width="1.2" height="2.5" fill="#0e8c0e"/><rect x="6.0" y="274.4" width="1.2" height="7.2" fill="#d81212"/><rect x="8.0" y="274.9" width="1.2" height="8.2" fill="#0e8c0e"/><rect x="10.0" y="274.6" width="1.2" height="8.0" fill="#d81212"/><rect x="14.0" y="272.8" width="2" height="4.6" fill="#d81212"/><rect x="16.0" y="271.8" width="1.2" height="7.0" fill="#d81212"/><rect x="20.0" y="272.3" width="2" height="2.6" fill="#0e8c0e"/><rect x="22.0" y="276.6" width="1.2" height="2.6" fill="#0e8c0e"/><rect x="24.0" y="269.9" width="1.2" height="5.2" fill="#d81212"/><rect x="26.0" y="266.5" width="2" height="4.3" fill="#0e8c0e"/><rect x="28.0" y="263.2" width="1.2" height="7.7" fill="#0e8c0e"/><rect x="30.0" y="261.9" width="1.2" height="7.4" fill="#d81212"/><rect x="32.0" y="259.5" width="1.2" height="3.1" fill="#d81212"/><rect x="34.0" y="259.7" width="1.2" height="9.1" fill="#d81212"/><rect x="38.0" y="264.5" width="1.2" height="4.9" fill="#d81212"/><rect x="42.0" y="267.9" width="2" height="7.3" fill="#d81212"/><rect x="44.0" y="290.6" width="1.2" height="3.1" fill="#d81212"/><rect x="46.0" y="294.6" width="1.2" height="3.4" fill="#0e8c0e"/><rect x="48.0" y="295.9" width="1.2" height="3.3" fill="#0e8c0e"/><rect x="52.0" y="295.9" width="1.2" height="7.6" fill="#d81212"/><rect x="54.0" y="295.4" width="2" height="6.7" fill="#0e8c0e"/><rect x="56.0" y="293.9" width="1.2" height="8.9" fill="#0e8c0e"/><rect x="58.0" y="299.9" width="1.2" height="4.4" fill="#0e8c0e"/><rect x="60.0" y="292.5" width="1.2" height="8.4" fill="#0e8c0e"/><rect x="64.0" y="293.2" width="2" height="6.1" fill="#d81212"/><rect x="68.0" y="298.7" width="2" height="4.2" fill="#0e8c0e"/><rect x="70.0" y="293.8" width="2" height="2.6" fill="#d81212"/><rect x="72.0" y="292.4" width="1.2" height="3.4" fill="#d81212"/><rect x="74.0" y="290.8" width="1.2" height="2.7" fill="#d81212"/><rect x="76.0" y="286.1" width="1.2" height="5.1" fill="#0e8c0e"/><rect x="78.0" y="281.5" width="1.2" height="9.1" fill="#0e8c0e"/><rect x="80.0" y="278.8" width="2" height="8.5" fill="#d81212"/><rect x="82.0" y="281.1" width="1.2" height="2.9" fill="#0e8c0e"/><rect x="84.0" y="277.3" width="1.2" height="4.5" fill="#d81212"/><rect x="86.0" y="272.5" width="2" height="5.3" fill="#0e8c0e"/><rect x="88.0" y="272.6" width="2" height="5.3" fill="#d81212"/><rect x="90.0" y="271.2" width="1.2" height="8.2" fill="#0e8c0e"/><rect x="727.9" y="187.0" width="1.2" height="25.0" fill="#0e8c0e"/><rect x="731.8" y="206.0" width="2" height="20.0" fill="#d81212"/><rect x="732.6" y="192.0" width="1.2" height="20.0" fill="#d81212"/><rect x="709.7" y="173.0" width="1.2" height="10.6" fill="#0e8c0e"/><rect x="711.5" y="186.0" width="2" height="7.4" fill="#d81212"/><rect x="788.5" y="335.0" width="1.2" height="45.0" fill="#d81212"/><rect x="786.7" y="303.7" width="1.2" height="33.3" fill="#d81212"/><rect x="779.2" y="247.8" width="1.2" height="39.2" fill="#0e8c0e"/><rect x="781.8" y="290.6" width="1.2" height="29.8" fill="#d81212"/><rect x="772.9" y="225.4" width="1.2" height="20.6" fill="#d81212"/><rect x="804.5" y="301.3" width="1.2" height="7.1" fill="#d81212"/><rect x="806.8" y="289.0" width="2" height="8.8" fill="#d81212"/><rect x="808.6" y="283.6" width="2" height="7.1" fill="#d81212"/><rect x="811.2" y="282.8" width="2" height="7.0" fill="#d81212"/><rect x="813.3" y="285.4" width="1.2" height="5.3" fill="#0e8c0e"/><rect x="815.1" y="269.5" width="1.2" height="15.9" fill="#d81212"/><rect x="817.9" y="265.0" width="1.2" height="11.6" fill="#d81212"/><rect x="820.9" y="246.5" width="1.2" height="14.1" fill="#0e8c0e"/><rect x="823.6" y="261.5" width="1.2" height="16.8" fill="#0e8c0e"/><rect x="825.4" y="272.0" width="2" height="10.8" fill="#d81212"/><rect x="828.0" y="267.7" width="1.2" height="5.3" fill="#d81212"/><rect x="830.7" y="253.6" width="1.2" height="10.6" fill="#d81212"/><rect x="832.4" y="249.2" width="2" height="6.2" fill="#0e8c0e"/><rect x="834.2" y="241.2" width="2" height="5.3" fill="#d81212"/><rect x="836.0" y="227.0" width="1.2" height="10.7" fill="#d81212"/><rect x="837.7" y="247.4" width="1.2" height="9.7" fill="#d81212"/><rect x="841.3" y="237.7" width="2" height="7.0" fill="#d81212"/><rect x="843.0" y="232.4" width="1.2" height="7.0" fill="#d81212"/><rect x="850.1" y="230.6" width="1.2" height="7.1" fill="#d81212"/><rect x="851.9" y="235.9" width="2" height="5.3" fill="#0e8c0e"/><rect x="854.5" y="235.9" width="2" height="6.2" fill="#0e8c0e"/><rect x="857.2" y="227.0" width="1.2" height="5.4" fill="#0e8c0e"/><rect x="859.0" y="225.3" width="2" height="5.3" fill="#d81212"/><rect x="940.9" y="81.4" width="1.2" height="28.3" fill="#0e8c0e"/><rect x="964.5" y="77.5" width="1.2" height="16.5" fill="#d81212"/><rect x="962.5" y="82.0" width="2" height="14.0" fill="#d81212"/><rect x="758.7" y="206.8" width="1.2" height="11.2" fill="#0e8c0e"/><rect x="766.2" y="218.0" width="2" height="9.0" fill="#0e8c0e"/><rect x="783.5" y="300.0" width="1.2" height="30.0" fill="#d81212"/><rect x="790.5" y="340.0" width="1.2" height="38.0" fill="#0e8c0e"/><rect x="797.2" y="298.0" width="1.2" height="22.0" fill="#0e8c0e"/></g>
<line x1="797.1" y1="297.8" x2="849.2" y2="229.7" stroke="#30a030" stroke-width="0.8"/>
<line x1="679.3" y1="195.6" x2="706" y2="170.4" stroke="#30a030" stroke-width="0.8"/>
<line x1="0" y1="293.6" x2="23" y2="286.6" stroke="#30a030" stroke-width="0.8"/>
<line x1="69.8" y1="292" x2="90" y2="282.2" stroke="#30a030" stroke-width="0.8"/>
<line x1="872.4" y1="205" x2="902" y2="182" stroke="#30a030" stroke-width="0.8"/>
<path d="M675.9,187.7l3.8,2.3l-3.8,2.3z" fill="#1414ff"/>
<path d="M680.6,193.0l2.6,2.6l-2.6,2.6l-2.6,-2.6z" fill="#1010ff"/><circle cx="680.6" cy="195.6" r="1.9" fill="#1010ff"/>
<path d="M716.0,159.5l3.8,2.3l-3.8,2.3z" fill="#1414ff"/>
<path d="M717.8,167.8l2.6,2.6l-2.6,2.6l-2.6,-2.6z" fill="#1010ff"/><circle cx="717.8" cy="170.4" r="1.9" fill="#1010ff"/>
<path d="M741.8,183.4l3.8,2.3l-3.8,2.3z" fill="#1414ff"/>
<path d="M745.2,190.2l2.6,2.6l-2.6,2.6l-2.6,-2.6z" fill="#1010ff"/><circle cx="745.2" cy="192.8" r="1.9" fill="#1010ff"/>
<path d="M766.2,203.1l3.8,2.3l-3.8,2.3z" fill="#1414ff"/>
<path d="M769.5,209.1l2.6,2.6l-2.6,2.6l-2.6,-2.6z" fill="#1010ff"/><circle cx="769.5" cy="211.7" r="1.9" fill="#1010ff"/>
<path d="M793.5,295.5l3.8,2.3l-3.8,2.3z" fill="#1414ff"/>
<path d="M797.7,321.6l2.6,2.6l-2.6,2.6l-2.6,-2.6z" fill="#1010ff"/><circle cx="797.7" cy="324.2" r="1.9" fill="#1010ff"/>
<path d="M875.4,210.3l2.6,2.6l-2.6,2.6l-2.6,-2.6z" fill="#1010ff"/><circle cx="875.4" cy="212.9" r="1.9" fill="#1010ff"/>
<path d="M872.6,202.7l3.8,2.3l-3.8,2.3z" fill="#1414ff"/>
<path d="M897.2,173.2l3.8,2.3l-3.8,2.3z" fill="#1414ff"/>
<path d="M901.0,178.8l2.6,2.6l-2.6,2.6l-2.6,-2.6z" fill="#1010ff"/><circle cx="901" cy="181.4" r="1.9" fill="#1010ff"/>
<path d="M906.8,181.8l2.6,2.6l-2.6,2.6l-2.6,-2.6z" fill="#1010ff"/><circle cx="906.8" cy="184.4" r="1.9" fill="#1010ff"/>
<path d="M898.0,187.7l2.6,2.6l-2.6,2.6l-2.6,-2.6z" fill="#1010ff"/><circle cx="898" cy="190.3" r="1.9" fill="#1010ff"/>
<path d="M951.7,78.4l3.8,2.3l-3.8,2.3z" fill="#1414ff"/>
<path d="M955.8,93.8l2.6,2.6l-2.6,2.6l-2.6,-2.6z" fill="#1010ff"/><circle cx="955.8" cy="96.4" r="1.9" fill="#1010ff"/>
<path d="M951.1,97.7l2.6,2.6l-2.6,2.6l-2.6,-2.6z" fill="#1010ff"/><circle cx="951.1" cy="100.3" r="1.9" fill="#1010ff"/>
<path d="M946.9,89.4l3.8,2.3l-3.8,2.3z" fill="#1414ff"/>
<path d="M933.8,113.4l2.6,2.6l-2.6,2.6l-2.6,-2.6z" fill="#1010ff"/><circle cx="933.8" cy="116" r="1.9" fill="#1010ff"/>
<path d="M933.7,130.4l2.6,2.6l-2.6,2.6l-2.6,-2.6z" fill="#1010ff"/><circle cx="933.7" cy="133" r="1.9" fill="#1010ff"/>
<path d="M936.2,131.7l2.6,2.6l-2.6,2.6l-2.6,-2.6z" fill="#1010ff"/><circle cx="936.2" cy="134.3" r="1.9" fill="#1010ff"/>
<path d="M19.4,280.7l3.8,2.3l-3.8,2.3z" fill="#1414ff"/>
<path d="M23.0,285.7l2.6,2.6l-2.6,2.6l-2.6,-2.6z" fill="#1010ff"/><circle cx="23" cy="288.3" r="1.9" fill="#1010ff"/>
<path d="M66.2,287.8l3.8,2.3l-3.8,2.3z" fill="#1414ff"/>
<path d="M69.8,294.6l2.6,2.6l-2.6,2.6l-2.6,-2.6z" fill="#1010ff"/><circle cx="69.8" cy="297.2" r="1.9" fill="#1010ff"/>
<path d="M705.4,156.5h2.4v2h1.6l-2.8,2.8l-2.8,-2.8h1.6z" fill="#fff"/>
<path d="M719.3,158.5h2.4v2h1.6l-2.8,2.8l-2.8,-2.8h1.6z" fill="#fff"/>
<path d="M639.8,196.5h2.4v2h1.6l-2.8,2.8l-2.8,-2.8h1.6z" fill="#fff"/>
<path d="M755.8,191.1h2.4v2h1.6l-2.8,2.8l-2.8,-2.8h1.6z" fill="#fff"/>
<path d="M769.8,201.3h2.4v2h1.6l-2.8,2.8l-2.8,-2.8h1.6z" fill="#fff"/>
<path d="M846.7,222.2h2.4v2h1.6l-2.8,2.8l-2.8,-2.8h1.6z" fill="#fff"/>
<path d="M886.0,186.8h2.4v2h1.6l-2.8,2.8l-2.8,-2.8h1.6z" fill="#fff"/>
<path d="M898.8,168.1h2.4v2h1.6l-2.8,2.8l-2.8,-2.8h1.6z" fill="#fff"/>
<path d="M901.7,174.0h2.4v2h1.6l-2.8,2.8l-2.8,-2.8h1.6z" fill="#fff"/>
<path d="M928.7,124.5h2.4v2h1.6l-2.8,2.8l-2.8,-2.8h1.6z" fill="#fff"/>
<path d="M935.8,107.2h2.4v2h1.6l-2.8,2.8l-2.8,-2.8h1.6z" fill="#fff"/>
<path d="M946.0,94.7h2.4v2h1.6l-2.8,2.8l-2.8,-2.8h1.6z" fill="#fff"/>
<path d="M955.4,75.0h2.4v2h1.6l-2.8,2.8l-2.8,-2.8h1.6z" fill="#fff"/>
<path d="M20.0,275.2h2.4v2h1.6l-2.8,2.8l-2.8,-2.8h1.6z" fill="#fff"/>
<path d="M39.5,260.2h2.4v2h1.6l-2.8,2.8l-2.8,-2.8h1.6z" fill="#fff"/>
<path d="M642.5,211.0l2.5,-2v4z" fill="#e8e8e8"/>
<path d="M720.5,168.0l2.5,-2v4z" fill="#e8e8e8"/>
<path d="M757.0,203.0l2.5,-2v4z" fill="#e8e8e8"/>
<path d="M849.5,232.0l2.5,-2v4z" fill="#e8e8e8"/>
<path d="M887.5,200.0l2.5,-2v4z" fill="#e8e8e8"/>
<path d="M902.5,178.0l2.5,-2v4z" fill="#e8e8e8"/>
<path d="M956.5,95.0l2.5,-2v4z" fill="#e8e8e8"/>
<path d="M40.9,268.0l2.5,-2v4z" fill="#e8e8e8"/>
<path d="M70.5,297.0l2.5,-2v4z" fill="#e8e8e8"/>
</svg>
<div class="lb" style="left:696.6px;top:145.2px">35<br>Sell</div>
<div class="lb" style="left:710.5px;top:145.2px">37<br>Sell</div>
<div class="lb" style="left:670.2px;top:201.8px">Buy<br>35</div>
<div class="lb" style="left:709.2px;top:176.7px">Buy<br>37</div>
<div class="lb" style="left:631.0px;top:185.5px">30<br>Sell</div>
<div class="lb" style="left:747.7px;top:180.7px">31<br>Sell</div>
<div class="lb" style="left:734.4px;top:197.9px">Buy<br>31</div>
<div class="lb" style="left:761.0px;top:191.7px">46<br>Sell</div>
<div class="lb" style="left:758.7px;top:217.6px">Buy<br>46</div>
<div class="lb" style="left:787.0px;top:330.6px">Buy<br>27</div>
<div class="lb" style="left:837.9px;top:211.8px">27<br>Sell</div>
<div class="lb" style="left:866.3px;top:217.7px">Buy<br>14</div>
<div class="lb" style="left:878.0px;top:177.4px">14<br>Sell</div>
<div class="lb" style="left:891.0px;top:157.7px">17<br>Sell</div>
<div class="lb" style="left:888.0px;top:196.1px">Buy<br>17</div>
<div class="lb" style="left:895.8px;top:189.2px">Buy<br>18</div>
<div class="lb" style="left:920.7px;top:114.9px">16<br>Sell</div>
<div class="lb" style="left:925.0px;top:138.2px">Buy<br>15</div>
<div class="lb" style="left:927.0px;top:98.4px">15<br>Sell</div>
<div class="lb" style="left:938.0px;top:85.1px">15<br>Sell</div>
<div class="lb" style="left:945.8px;top:102.4px">Buy<br>13</div>
<div class="lb" style="left:946.6px;top:64.6px">13<br>Sell</div>
<div class="lb" style="left:12.0px;top:265.1px">80<br>Sell</div>
<div class="lb" style="left:13.0px;top:294.3px">Buy<br>66</div>
<div class="lb" style="left:30.7px;top:249.2px">66<br>Sell</div>
<div class="lb" style="left:59.8px;top:302.3px">Buy<br>63</div>
<div id="dlg"><div class="in">
<div class="title" style="left:94px;letter-spacing:-0.28px">TWF.FITX HOT :</div><div class="title" style="left:140.1px">@QuantBrains_Connect_X1;</div><div class="title" style="left:224.5px">@QuantBrains_Connect_X1;</div><div class="title" style="left:309.2px;letter-spacing:-0.25px">@YT_NewNXT_01</div><div class="title" style="left:363.2px">Back-Testing</div><div class="title" style="left:402.8px">Strategy</div><div class="title" style="left:429.8px">Performance Report</div>

<svg class="abs" style="left:0;top:0" width="640" height="40" viewBox="0 0 640 40">
<g fill="#b8b8b8">
 <path d="M95.5,27.4l2.5,-2.4v1.6h1.2v1.6h-1.2v1.6z"/><rect x="99.8" y="26.4" width="0.8" height="2"/>
 <path d="M124.8,27.4l-2.5,-2.4v1.6h-3.2v1.6h3.2v1.6z"/>
</g>
<g fill="#606060">
 <path d="M109.8,26.5h3l-1.5,1.7z"/><path d="M134.1,26.5h3l-1.5,1.7z"/>
</g>
<g fill="#d4d4d4"><rect x="139.5" y="20.3" width="1" height="14"/><rect x="208" y="20.3" width="1" height="14"/><rect x="292.8" y="20.3" width="1" height="14"/></g>
<!-- save -->
<rect x="145.3" y="22.1" width="9.4" height="9.4" rx="0.8" fill="#4f7fc4"/>
<rect x="147" y="22.6" width="6" height="3.4" fill="#fff"/>
<rect x="147.3" y="28.3" width="5.4" height="2.6" fill="#fff" opacity="0.85"/>
<rect x="150.5" y="28.8" width="1.5" height="1.5" fill="#4f7fc4"/>
<!-- page setup -->
<g fill="none" stroke="#8a8a8a" stroke-width="0.7">
 <path d="M161.5,25.2h4.5v5h-4.5z"/><path d="M166,25.2v-2.8h3.5l2,1.8v6h-5.5"/><path d="M162.5,28.8h2.5"/>
</g>
<!-- printer -->
<g fill="none" stroke="#999" stroke-width="0.7">
 <path d="M179.5,25v-2.6h6v2.6"/><rect x="177.3" y="25" width="10.5" height="4.5" rx="0.8"/>
</g>
<rect x="179.2" y="28.3" width="6.6" height="3.5" fill="#7ea4d8" opacity="0.8"/>
<rect x="186.2" y="26" width="0.8" height="0.8" fill="#3c3"/>
<!-- gear -->
<g fill="none" stroke="#9a9a9a" stroke-width="0.9"><circle cx="199" cy="27.1" r="2.8"/><circle cx="199" cy="27.1" r="1.2"/></g>
<g stroke="#9a9a9a" stroke-width="1.2"><path d="M199,22.8v1.3M199,30.1v1.3M194.7,27.1h1.3M202,27.1h1.3M196,24.1l0.9,0.9M201.1,29.2l0.9,0.9M196,30.1l0.9,-0.9M201.1,25l0.9,-0.9"/></g>
<!-- crosshair -->
<g stroke="#c4c4c4" stroke-width="0.8"><path d="M213,30.4h10.2M221.6,22.3v9.7"/></g>
<!-- hand -->
<path d="M231,27.5l1.5,-1.5v-2.5h1v-1h1v1h1v1h1v3.5c0,2-1,3.3-2.5,3.3h-1c-1,0-2,-1.5-3,-3.8z" fill="none" stroke="#b0b0b0" stroke-width="0.7"/>
<!-- zoom in/out -->
<g fill="none" stroke="#c4c4c4" stroke-width="0.8">
 <circle cx="250.6" cy="25.5" r="3.2"/><path d="M252.9,27.8l2.7,2.5M249,25.5h3.2M250.6,23.9v3.2"/>
 <circle cx="267.2" cy="25.5" r="3.2"/><path d="M269.5,27.8l2.7,2.5M265.6,25.5h3.2"/>
</g>
<!-- 1:1 -->
<g fill="none" stroke="#b0b0b0" stroke-width="0.7"><rect x="278.4" y="22.4" width="10.4" height="5.8"/><path d="M281.5,23.8v3M285.5,23.8v3M283.5,24.5v0.5M283.5,26v0.5M279,30.4h9.5"/></g>
<path d="M288.8,30.4l-1.5,-0.9v1.8z" fill="#909090"/>
<!-- chart icon -->
<g fill="none" stroke-width="0.8">
 <path d="M297.5,28.5c2,-3 5,-4 8,-5l3,-1.5" stroke="#b0b0b0"/>
 <path d="M297.5,30c3,-1.5 6,-2 11,-3" stroke="#b0b0b0"/>
 <path d="M298,27.5c3,-1 6,-1.2 10,-2.5" stroke="#5cb85c"/>
 <path d="M298,29c2.5,1 6,2 10,2.2" stroke="#909090"/>
</g>
<!-- window ctrl -->
<g fill="none" stroke="#555" stroke-width="0.8">
 <path d="M575.3,10.3h5.5"/>
 <rect x="599.4" y="8.2" width="5.4" height="5.2" stroke="#777" stroke-width="0.7"/>
 <path d="M624.2,8l5.6,5.4M629.8,8l-5.6,5.4"/>
</g>
</svg>

<div style="position:absolute;left:90px;top:36px;width:549px;height:1px;background:#d9d9d9"></div>
<div id="tree"><div class="in2">
<svg class="abs" style="left:0;top:0" width="250" height="200" viewBox="0 0 250 200">
<g stroke="#c4c4c4" stroke-width="0.8" stroke-dasharray="0.8 1.2" fill="none">
<path d="M94.4,43.6V185.72M101.5,43.6V158.51"/>
<path d="M101.5,49.7H105.5"/>
<path d="M101.5,58.7H105.5"/>
<path d="M101.5,67.8H105.5"/>
<path d="M101.5,76.9H105.5"/>
<path d="M101.5,86.0H105.5"/>
<path d="M101.5,95.0H105.5"/>
<path d="M101.5,104.1H105.5"/>
<path d="M101.5,113.2H105.5"/>
<path d="M101.5,122.2H105.5"/>
<path d="M101.5,131.3H105.5"/>
<path d="M101.5,140.4H105.5"/>
<path d="M101.5,149.4H105.5"/>
<path d="M101.5,158.5H105.5"/>
<path d="M94.4,185.7H99.5"/>
</g>
<rect x="92.35" y="38.30" width="4.3" height="4.6" fill="#ececec" stroke="#b4b4b4" stroke-width="0.7"/>
<path d="M93.4,40.6h2.2" stroke="#6e8cb0" stroke-width="0.7"/>
<g shape-rendering="crispEdges"><rect x="106.5" y="47.5" width="5" height="5" fill="#ffffff" stroke="#b4b4b4" stroke-width="1"/><path d="M108.5,48v4M109.5,48v4M107,49.5h4M107,50.5h4" stroke="#f27a68" stroke-width="1" opacity="0.5"/></g>
<g shape-rendering="crispEdges"><rect x="106.5" y="56.5" width="5" height="5" fill="#ffffff" stroke="#b4b4b4" stroke-width="1"/><path d="M108.5,57v4M109.5,57v4M107,58.5h4M107,59.5h4" stroke="#f27a68" stroke-width="1" opacity="0.5"/></g>
<g shape-rendering="crispEdges"><rect x="106.5" y="65.5" width="5" height="5" fill="#ffffff" stroke="#b4b4b4" stroke-width="1"/><path d="M108.5,66v4M109.5,66v4M107,67.5h4M107,68.5h4" stroke="#f27a68" stroke-width="1" opacity="0.5"/></g>
<rect x="106.35" y="74.53" width="5" height="5.2" fill="#fff" stroke="#a0a0a0" stroke-width="0.7"/><path d="M107.2,77.6l1,-0.6l1,0.4l1.6,-1" fill="none" stroke="#e86050" stroke-width="0.7"/>
<rect x="106.35" y="83.60" width="5" height="5.2" fill="#fff" stroke="#a0a0a0" stroke-width="0.7"/><path d="M107.2,86.7l1,-0.6l1,0.4l1.6,-1" fill="none" stroke="#e86050" stroke-width="0.7"/>
<rect x="106.35" y="92.67" width="5" height="5.2" fill="#fff" stroke="#a0a0a0" stroke-width="0.7"/><path d="M107.2,95.7l1,-0.6l1,0.4l1.6,-1" fill="none" stroke="#e86050" stroke-width="0.7"/>
<rect x="106.35" y="101.74" width="5" height="5.2" fill="#fff" stroke="#a0a0a0" stroke-width="0.7"/><path d="M107.2,104.8l1,-0.6l1,0.4l1.6,-1" fill="none" stroke="#e86050" stroke-width="0.7"/>
<rect x="106.35" y="110.81" width="5" height="5.2" fill="#fff" stroke="#a0a0a0" stroke-width="0.7"/><path d="M107.2,113.9l1,-0.6l1,0.4l1.6,-1" fill="none" stroke="#e86050" stroke-width="0.7"/>
<rect x="106.35" y="119.88" width="5" height="5.2" fill="#fff" stroke="#a0a0a0" stroke-width="0.7"/><path d="M107.2,122.9l1,-0.6l1,0.4l1.6,-1" fill="none" stroke="#e86050" stroke-width="0.7"/>
<rect x="106.35" y="128.95" width="5" height="5.2" fill="#fff" stroke="#a0a0a0" stroke-width="0.7"/><path d="M107.2,132.0l1,-0.6l1,0.4l1.6,-1" fill="none" stroke="#e86050" stroke-width="0.7"/>
<rect x="106.35" y="138.02" width="5" height="5.2" fill="#fff" stroke="#a0a0a0" stroke-width="0.7"/><path d="M107.2,141.1l1,-0.6l1,0.4l1.6,-1" fill="none" stroke="#e86050" stroke-width="0.7"/>
<rect x="106.35" y="147.09" width="5" height="5.2" fill="#fff" stroke="#a0a0a0" stroke-width="0.7"/><path d="M107.2,150.1l1,-0.6l1,0.4l1.6,-1" fill="none" stroke="#e86050" stroke-width="0.7"/>
<rect x="106.35" y="156.16" width="5" height="5.2" fill="#fff" stroke="#a0a0a0" stroke-width="0.7"/><path d="M107.2,159.2l1,-0.6l1,0.4l1.6,-1" fill="none" stroke="#e86050" stroke-width="0.7"/>
<rect x="92.35" y="165.28" width="4.3" height="4.6" fill="#ececec" stroke="#b4b4b4" stroke-width="0.7"/>
<path d="M93.4,167.6h2.2" stroke="#6e8cb0" stroke-width="0.7"/>
<path d="M94.5,166.5v2.2" stroke="#6e8cb0" stroke-width="0.7"/>
<rect x="92.35" y="174.35" width="4.3" height="4.6" fill="#ececec" stroke="#b4b4b4" stroke-width="0.7"/>
<path d="M93.4,176.7h2.2" stroke="#6e8cb0" stroke-width="0.7"/>
<path d="M94.5,175.6v2.2" stroke="#6e8cb0" stroke-width="0.7"/>
<g shape-rendering="crispEdges"><rect x="99.5" y="183.5" width="5" height="5" fill="#ffffff" stroke="#b4b4b4" stroke-width="1"/><path d="M101.5,184v4M102.5,184v4M100,185.5h4M100,186.5h4" stroke="#f27a68" stroke-width="1" opacity="0.5"/></g>
</svg>
<div class="ti" style="left:98.6px;top:35.4px">Strategy Analysis</div>
<div class="ti sel" style="left:113.9px;top:44.5px">Strategy Performance Summary</div>
<div class="ti" style="left:113.9px;top:53.5px">Performance Ratios</div>
<div class="ti" style="left:113.9px;top:62.6px">Time Analysis</div>
<div class="ti" style="left:113.9px;top:71.7px">Equity Curve Detailed</div>
<div class="ti" style="left:113.9px;top:80.8px">Equity Curve Detailed Long</div>
<div class="ti" style="left:113.9px;top:89.8px">Equity Curve Detailed Short</div>
<div class="ti" style="left:113.9px;top:98.9px">Equity Curve Detailed with DrawDown</div>
<div class="ti" style="left:113.9px;top:108.0px">Equity Run-up &amp; Drawdown</div>
<div class="ti" style="left:113.9px;top:117.0px">Equity Run-up &amp; Drawdown (%)</div>
<div class="ti" style="left:113.9px;top:126.1px">Equity Curve Close To Close</div>
<div class="ti" style="left:113.9px;top:135.2px">Equity Curve Close To Close With Drawdown</div>
<div class="ti" style="left:113.9px;top:144.2px">Buy &amp; Hold Return</div>
<div class="ti" style="left:113.9px;top:153.3px">Value Added Monthly Index</div>
<div class="ti" style="left:98.6px;top:162.4px">Trade Analysis</div>
<div class="ti" style="left:98.6px;top:171.5px">Periodical Analysis</div>
<div class="ti" style="left:106.7px;top:180.7px">Settings</div>
</div></div>
<div style="position:absolute;left:247px;top:36px;width:4px;height:329px;background:#efefef"></div>
<div id="tbl"><div class="in3">
<div class="hdr"><span style="display:inline-block;transform:scaleY(1.12);transform-origin:0 11px">Strategy Performance Summary</span></div>
<div class="colh" style="left:440.3px">All Trades</div>
<div class="colh" style="left:506.3px">Long Trades</div>
<div class="colh" style="left:571.8px">Short Trades</div>
<div style="position:absolute;left:253px;top:63.5px;width:360px;height:1px;background:#e0e0e0"></div>
<div class="r" style="top:66.8px"><span class="c0">Net Profit</span><span class="c1">¤62,812,800.00</span><span class="c2">¤62,812,800.00</span><span class="c3">n/a</span></div>
<div class="r" style="top:76.6px"><span class="c0">Gross Profit</span><span class="c1">¤90,323,800.00</span><span class="c2">¤90,323,800.00</span><span class="c3">n/a</span></div>
<div class="r" style="top:86.3px"><span class="c0">Gross Loss</span><span class="c1 red">(¤27,511,000.00)</span><span class="c2 red">(¤27,511,000.00)</span><span class="c3">n/a</span></div>
<div class="r" style="top:96.1px"><span class="c0">Adjusted Net Profit</span><span class="c1">¤42,004,999.95</span><span class="c2">¤42,004,999.95</span><span class="c3">n/a</span></div>
<div class="r" style="top:105.9px"><span class="c0">Adjusted Gross Profit</span><span class="c1">¤74,101,166.62</span><span class="c2">¤74,101,166.62</span><span class="c3">n/a</span></div>
<div class="r" style="top:115.6px"><span class="c0">Adjusted Gross Loss</span><span class="c1 red">(¤32,096,166.67)</span><span class="c2 red">(¤32,096,166.67)</span><span class="c3">n/a</span></div>
<div class="r" style="top:125.4px"><span class="c0">Select Net Profit</span><span class="c1">¤35,429,400.00</span><span class="c2">¤35,429,400.00</span><span class="c3">n/a</span></div>
<div class="r" style="top:135.2px"><span class="c0">Select Gross Profit</span><span class="c1">¤52,434,200.00</span><span class="c2">¤52,434,200.00</span><span class="c3">n/a</span></div>
<div class="r" style="top:145.0px"><span class="c0">Select Gross Loss</span><span class="c1 red">(¤17,004,800.00)</span><span class="c2 red">(¤17,004,800.00)</span><span class="c3">n/a</span></div>
<div class="r" style="top:154.7px"><span class="c0">Account Size Required</span><span class="c1">¤5,440,800.00</span><span class="c2">¤5,440,800.00</span><span class="c3">n/a</span></div>
<div class="r" style="top:164.5px"><span class="c0">Return on Account</span><span class="c1">1154.48%</span><span class="c2">1154.48%</span><span class="c3">n/a</span></div>
<div class="r" style="top:174.3px"><span class="c0">Return on Initial Capital</span><span class="c1">62812.8%</span><span class="c2">62812.8%</span><span class="c3">n/a</span></div>
<div class="r" style="top:184.0px"><span class="c0">Max Strategy Drawdown</span><span class="c1 red">(¤9,924,600.00)</span><span class="c2 red">(¤9,924,600.00)</span><span class="c3">n/a</span></div>
<div class="r" style="top:193.8px"><span class="c0">Max Strategy Drawdown (%)</span><span class="c1 red">(290.81%)</span><span class="c2 red">(290.81%)</span><span class="c3">n/a</span></div>
<div class="r" style="top:203.6px"><span class="c0">Max Close To Close Drawdown</span><span class="c1 red">(¤5,440,800.00)</span><span class="c2 red">(¤5,440,800.00)</span><span class="c3">n/a</span></div>
<div class="r" style="top:213.3px"><span class="c0">Max Close To Close Drawdown (%)</span><span class="c1 red">(352.5%)</span><span class="c2 red">(352.5%)</span><span class="c3">n/a</span></div>
<div class="r" style="top:223.1px"><span class="c0">Return on Max Strategy Drawdown</span><span class="c1">6.33</span><span class="c2">6.33</span><span class="c3">n/a</span></div>
<div class="r" style="top:232.9px"><span class="c0">Profit Factor</span><span class="c1">3.28</span><span class="c2">3.28</span><span class="c3">n/a</span></div>
<div class="r" style="top:242.7px"><span class="c0">Adjusted Profit Factor</span><span class="c1">2.31</span><span class="c2">2.31</span><span class="c3">n/a</span></div>
<div class="r" style="top:252.4px"><span class="c0">Select Profit Factor</span><span class="c1">3.08</span><span class="c2">3.08</span><span class="c3">n/a</span></div>
<div class="r" style="top:262.2px"><span class="c0">Max # Contracts Held</span><span class="c1">122</span><span class="c2">122</span><span class="c3">0</span></div>
<div class="r" style="top:272.0px"><span class="c0">Slippage Paid</span><span class="c1">¤0.00</span><span class="c2">¤0.00</span><span class="c3">¤0.00</span></div>
<div class="r" style="top:281.7px"><span class="c0">Commission Paid</span><span class="c1">¤3,111,000.00</span><span class="c2">¤3,111,000.00</span><span class="c3">n/a</span></div>
<div class="r" style="top:291.5px"><span class="c0">Open Position P/L</span><span class="c1">n/a</span><span class="c2">n/a</span><span class="c3">n/a</span></div>
<div class="r" style="top:301.3px"><span class="c0">Annual Rate of Return</span><span class="c1">12516.3%</span><span class="c2">12516.3%</span><span class="c3">n/a</span></div>
<div class="r" style="top:311.1px"><span class="c0">Monthly Rate of Return</span><span class="c1">1043.02%</span><span class="c2">1043.02%</span><span class="c3">n/a</span></div>
<div class="r" style="top:320.8px"><span class="c0">Buy&nbsp; Hold Return</span><span class="c1">¤102,738.65</span><span class="c2">¤102,738.65</span><span class="c3">n/a</span></div>
<div class="r" style="top:330.6px"><span class="c0">Avg Monthly Return</span><span class="c1">¤1,064,623.73</span><span class="c2"></span><span class="c3"></span></div>
<div class="r" style="top:340.4px"><span class="c0">Monthly Return StdDev</span><span class="c1">¤2,512,326.98</span><span class="c2"></span><span class="c3"></span></div>
<div class="r" style="top:350.1px"><span class="c0">Total # of Trades</span><span class="c1">67</span><span class="c2">67</span><span class="c3">0</span></div>
<div class="r" style="top:359.9px"><span class="c0">Percent Profitable</span><span class="c1">46.27%</span><span class="c2">46.27%</span><span class="c3">0%</span></div>
<div style="position:absolute;left:253.5px;top:241.3px;width:290px;height:2px;border-radius:1px;background:#e61e28"></div>
<div style="position:absolute;left:630px;top:51px;width:9px;height:314px;background:#f0f0f0"></div>
<div style="position:absolute;left:630.5px;top:60px;width:8px;height:290px;background:#cdcdcd"></div>
<svg class="abs" style="left:625px;top:50px" width="15" height="316" viewBox="625 50 15 316">
<path d="M632,57.5l2,-2l2,2" fill="none" stroke="#606060" stroke-width="1"/>
<path d="M632,359.5l2,2l2,-2" fill="none" stroke="#606060" stroke-width="1"/>
</svg>

</div></div>
<div style="position:absolute;left:90px;top:356.5px;width:156px;height:8.5px;background:#f0f0f0"></div>
<div style="position:absolute;left:99.5px;top:357px;width:136px;height:8px;background:#cdcdcd"></div>
<svg class="abs" style="left:88px;top:355px" width="160" height="12" viewBox="88 355 160 12">
<path d="M96,358.8l-1.6,1.6l1.6,1.6" fill="none" stroke="#606060" stroke-width="0.9"/>
<path d="M240.5,358.8l1.6,1.6l-1.6,1.6" fill="none" stroke="#606060" stroke-width="0.9"/>
</svg>
<svg class="abs" style="left:630px;top:368px" width="10" height="10" viewBox="630 368 10 10">
<g fill="#b0b0b0"><rect x="636" y="374" width="0.8" height="0.8"/><rect x="634.5" y="375.2" width="0.8" height="0.8"/><rect x="636" y="375.2" width="0.8" height="0.8"/></g>
</svg>

<div style="position:absolute;left:90px;top:365px;width:549px;height:12px;background:#f0f0f0;border-top:1px solid #e0e0e0"></div>
</div></div>
<div class="abs" style="left:737px;top:347px;font-size:9.8px;line-height:11px;color:#dcd400;white-space:nowrap">EVA: 0.52 / RiskCover: 1.00 * filter(1.00,1.00) = 0.52</div>
<div class="abs" style="left:737px;top:369px;font-size:9.8px;line-height:11px;color:#dcd400;white-space:nowrap">EVA: 0.00 / RiskCover: 1.00 * filter(1.00,1.00) = 0.00</div>
<div class="abs" style="left:0;top:0;width:1024px;height:13px;overflow:hidden">
 <div class="abs" style="left:5px;top:0.5px;width:16.5px;height:6.2px;background:#858585;border-radius:1px"></div>
 <div class="abs" style="left:7px;top:0px;font-size:5.6px;line-height:7px;color:#e8e8e8">SA</div>
 <div class="abs" style="left:16.3px;top:1.2px;width:0.6px;height:4.8px;background:#b8b8b8"></div>
 <svg class="abs" style="left:0;top:0" width="90" height="16" viewBox="0 0 90 16"><path d="M17.6,3h2.4l-1.2,1.4z" fill="#e8e8e8"/><rect x="79.6" y="0.8" width="6.6" height="6" fill="none" stroke="#a8a8a8" stroke-width="0.6"/><path d="M81.6,3.3h2.6l-1.3,1.5z" fill="#e0e0e0"/><rect x="56.4" y="8.2" width="6" height="5.6" fill="none" stroke="#b0b0b0" stroke-width="0.6"/><path d="M57.9,9.6l3,2.8M60.9,9.6l-3,2.8" stroke="#c8c8c8" stroke-width="0.6"/></svg>
 <div class="abs" style="left:25px;top:0.5px;width:10.5px;height:6.2px;background:#8c8c8c;border-radius:1px"></div>
 <div class="abs" style="left:26.2px;top:0px;font-size:5.6px;line-height:7px;color:#f0f0f0">NP</div>
 <div class="abs" style="left:39px;top:0px;font-size:5.6px;line-height:7px;color:#9a9a9a;letter-spacing:-0.1px;white-space:nowrap">TWF.FITX HOT</div>
 <div class="abs" style="left:1px;top:7.5px;font-size:5.8px;line-height:7px;color:#a8a8c8;white-space:nowrap">(high,&nbsp; 40,&nbsp; 0)</div>
 <div class="abs" style="left:36px;top:7.5px;font-size:5.8px;line-height:7px;color:#10c0c0">13,067</div>
 
 <div class="abs" style="left:65px;top:7.5px;font-size:5.8px;line-height:7px;color:#c0c0c0;white-space:nowrap">掛性回歸</div>
 <div class="abs" style="left:638px;top:1px;font-size:5.4px;line-height:7px;color:#f0f0f0;white-space:nowrap">@QuantBrains_Connect_X1 (30,&nbsp; 1,&nbsp; 2,&nbsp; 1,&nbsp; 1,&nbsp; 0,&nbsp; "R:\eeusconnect\XXXX.txt",&nbsp; 300,&nbsp; 0,&nbsp; 1), @QuantBrains_Connect_X1 (30,&nbsp; -1,&nbsp; 2,&nbsp; 1,&nbsp; 1,&nbsp; 0,&nbsp; "R:\eeusconnect\XXXX.txt"</div>
</div>
<svg class="abs" style="left:0;top:383px" width="10" height="10" viewBox="0 383 10 10"><rect x="1.3" y="384.2" width="6" height="5.8" fill="none" stroke="#a0a0a0" stroke-width="0.6"/><path d="M2.8,385.6l3,3M5.8,385.6l-3,3" stroke="#c8c8c8" stroke-width="0.6"/></svg>
<div class="abs" style="left:11px;top:383px;font-size:5.6px;line-height:7px;color:#c8c8d8;white-space:nowrap">@YT_NewNXT_indi</div>
<div class="abs" style="left:65px;top:383px;font-size:5.6px;line-height:7px;color:#c8c8d8;white-space:nowrap">(1,&nbsp; 1,&nbsp; 40,&nbsp; 1)</div>
<div class="abs" style="left:100px;top:383px;font-size:5.6px;line-height:7px;color:#b4a400;white-space:nowrap">0.50</div>
<div class="abs" style="left:115px;top:383px;font-size:5.6px;line-height:7px;color:#18a018;white-space:nowrap">1.15</div>
<div class="abs" style="left:92px;top:-1.5px;font-size:5.6px;line-height:7px;color:#b8b8b8;white-space:nowrap">@@NHOT&nbsp; 4.0&nbsp;&nbsp;&nbsp;&nbsp;&nbsp;&nbsp;&nbsp;&nbsp;&nbsp;&nbsp;&nbsp;&nbsp;&nbsp;&nbsp;&nbsp;&nbsp;&nbsp;&nbsp;&nbsp;&nbsp;&nbsp;&nbsp;&nbsp;&nbsp; T&nbsp;&nbsp;&nbsp; TWF.TXXXXXXF&nbsp; F&nbsp;&nbsp;&nbsp;&nbsp;&nbsp;&nbsp;&nbsp;&nbsp; 2023/07&nbsp;&nbsp;17:00:00.000&nbsp; O&nbsp; 49,670&nbsp;&nbsp; H&nbsp; 49,670&nbsp;&nbsp;&nbsp; <span style="color:#10c010">0&nbsp; +10,000</span>&nbsp;&nbsp;&nbsp;&nbsp;&nbsp;&nbsp; L&nbsp; 49,670&nbsp;&nbsp;&nbsp;&nbsp;&nbsp;&nbsp;&nbsp; C&nbsp; 49,670&nbsp;&nbsp;&nbsp;&nbsp; <span style="color:#10c010">0&nbsp; +10,670</span>&nbsp;&nbsp;&nbsp;&nbsp; V&nbsp; <span style="color:#10c010">+10,670&nbsp;&nbsp;&nbsp;&nbsp;&nbsp; +7&nbsp;&nbsp;&nbsp;&nbsp;&nbsp;&nbsp;&nbsp;&nbsp;&nbsp; 0.40%</span>&nbsp; U 7,684</div>
<svg class="abs" style="left:140px;top:0" width="20" height="4" viewBox="140 0 20 4"><rect x="143.5" y="0.5" width="5" height="4" fill="none" stroke="#a0a0a0" stroke-width="0.6"/><rect x="150.5" y="0.5" width="5" height="4" fill="none" stroke="#a0a0a0" stroke-width="0.6"/></svg>

</body></html>
